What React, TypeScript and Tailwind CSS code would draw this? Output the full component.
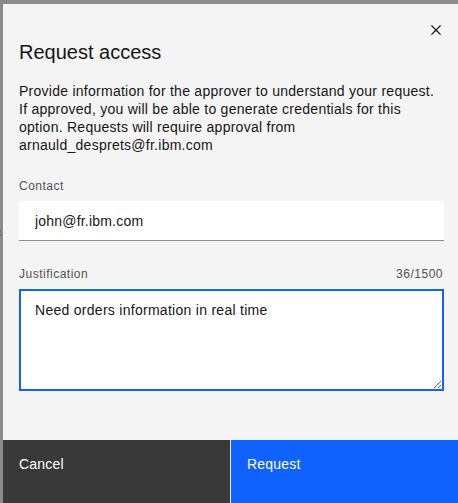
import React from 'react';

const font = { fontFamily: '"Liberation Sans", Arial, sans-serif' };

function CloseIcon() {
  return (
    <svg width="20" height="20" viewBox="0 0 32 32" fill="#161616">
      <path d="M24 9.4L22.6 8 16 14.6 9.4 8 8 9.4 14.6 16 8 22.6 9.4 24 16 17.4 22.6 24 24 22.6 17.4 16 24 9.4z" />
    </svg>
  );
}

export default function App() {
  return (
    <div
      className="relative flex h-[503px] w-[458px] overflow-hidden bg-[#8b8b8b] pl-[3px] pt-[4px]"
      style={font}
    >
      <span className="absolute left-[-6px] top-[222px] text-[14px] text-[#2a2a2a]">c</span>

      <div className="relative flex flex-1 flex-col bg-[#f4f4f4] text-[#161616]">
        <button className="absolute right-[12px] top-[16px] flex h-5 w-5 items-center justify-center">
          <CloseIcon />
        </button>

        <div className="flex flex-1 flex-col pl-4 pr-[14px] pt-[34px]">
          <h2 className="text-[20px] leading-[28px] font-normal">Request access</h2>

          <p className="mt-4 text-[14px] leading-[18px] tracking-[0.26px]">
            Provide information for the approver to understand your request.
            <br />
            If approved, you will be able to generate credentials for this
            <br />
            option. Requests will require approval from
            <br />
            arnauld_desprets@fr.ibm.com
          </p>

          <label className="mt-[22px] mb-[5px] block text-[12px] leading-5 text-[#525252] tracking-[0.5px]">
            Contact
          </label>
          <input
            defaultValue="john@fr.ibm.com"
            className="h-10 w-full border-b border-[#8d8d8d] bg-white px-4 text-[14px] tracking-[0.2px] text-[#161616] outline-none"
          />

          <div className="mt-[23px] mb-[5px] flex items-center justify-between text-[12px] leading-5 text-[#525252] tracking-[0.5px]">
            <span>Justification</span>
            <span className="pr-px">36/1500</span>
          </div>
          <textarea
            defaultValue="Need orders information in real time"
            className="h-[102px] w-full resize-y border-2 border-[#0f62fe] bg-white px-[14px] pt-[9px] text-[14px] leading-5 tracking-[0.28px] text-[#161616] outline-none"
          />
        </div>

        <div className="flex h-[63px] gap-px bg-[#e8e8e8]">
          <button className="flex flex-1 items-start bg-[#393939] px-4 pt-[15px] text-left text-[14px] leading-[18px] tracking-[0.2px] text-white">
            Cancel
          </button>
          <button className="flex flex-1 items-start bg-[#0f62fe] px-4 pt-[15px] text-left text-[14px] leading-[18px] tracking-[0.2px] text-white">
            Request
          </button>
        </div>
      </div>
    </div>
  );
}
